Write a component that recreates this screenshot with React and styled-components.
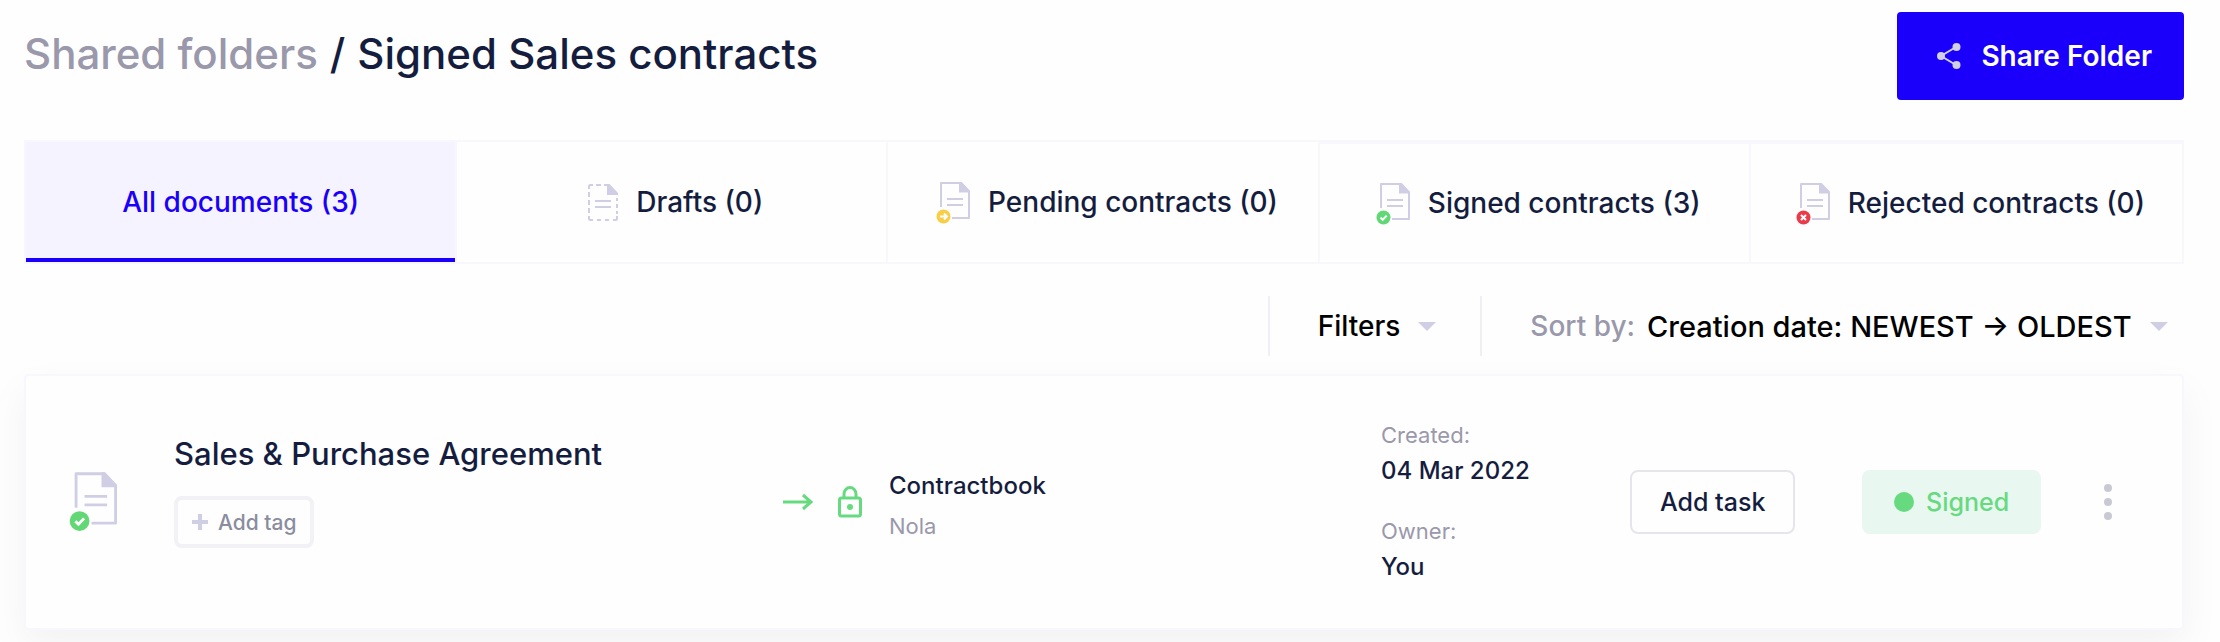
import styled, { createGlobalStyle } from 'styled-components';
import { useState } from 'react';

const GlobalStyle = createGlobalStyle`
  * {
    box-sizing: border-box;
  }

  body {
    margin: 0;
    background-color: #fefefe;
    color: #151d3f;
    font-family: Inter, 'Liberation Sans', sans-serif;
    font-weight: 500;
    overflow-x: hidden;
  }

  button,
  select {
    font: inherit;
    color: inherit;
    cursor: pointer;
  }
`;

const Page = styled.main`
  padding: 12px 36px 12px 24px;
`;

const Header = styled.header`
  display: flex;
  justify-content: space-between;
  align-items: center;
  margin-bottom: 40px;
`;

const Title = styled.h1`
  display: flex;
  gap: 12px;
  margin: 0;
  padding-bottom: 4px;
  font-size: 42px;
  line-height: 52px;
  font-weight: 500;

  a {
    color: #9a98ab;
    text-decoration: none;
  }
`;

const ShareButton = styled.button`
  display: flex;
  align-items: center;
  gap: 20px;
  height: 88px;
  padding: 0 32px 0 40px;
  border: none;
  border-radius: 4px;
  background-color: #1a00fa;
  color: #fff;
  font-size: 28px;
  font-weight: 600;
`;

const Tabs = styled.nav`
  display: grid;
  grid-template-columns: repeat(5, 1fr);
  border: 2px solid #f7f7fd;
`;

const Tab = styled.button`
  display: flex;
  justify-content: center;
  align-items: center;
  gap: 18px;
  height: 120px;
  padding: 0 0 0 ${(p) => (p.$icon ? '8px' : '0')};
  border: 0 solid #f7f7fd;
  border-right-width: 2px;
  border-top-width: ${(p) => (p.$inset ? '2px' : '0')};
  background-color: ${(p) => (p.$active ? '#f5f3ff' : 'transparent')};
  box-shadow: ${(p) => (p.$active ? 'inset 0 -4px #1a00fa' : 'none')};
  color: ${(p) => (p.$active ? '#1a00fa' : 'inherit')};
  font-size: 28px;
  white-space: nowrap;

  &:last-child {
    border-right-width: 0;
  }

  svg {
    margin-top: 2px;
  }
`;

const Toolbar = styled.div`
  display: flex;
  justify-content: flex-end;
  padding: 32px 16px 18px 0;
  color: #000;
  font-size: 28px;
`;

const ToolbarItem = styled.div`
  display: flex;
  align-items: center;
  gap: 18px;
  height: 60px;
  padding: 0 44px 0 48px;
  border-left: 2px solid #efeff6;

  &:last-child {
    padding-right: 0;
  }

  label {
    color: #9a98ab;
    margin-right: -6px;
  }
`;

const FilterButton = styled.button`
  display: flex;
  align-items: center;
  gap: 18px;
  padding: 0;
  border: none;
  background: none;
`;

const SortSelect = styled.select`
  appearance: none;
  padding: 0;
  border: none;
  background: none;
  font-size: 29px;
`;

const Card = styled.article`
  display: grid;
  grid-template-columns: 105px 609fr 55px 51px 492fr 249px 232px 242px 8px;
  align-items: center;
  height: 256px;
  padding: 0 70px 0 43px;
  border: 2px solid #f7f7fd;
  border-radius: 4px;
  background-color: #fefefe;
  box-shadow: 0 16px 40px rgba(0, 0, 0, 0.05);
`;

const DocumentInfo = styled.div`
  display: flex;
  flex-direction: column;
  align-items: flex-start;
  gap: 24px;
  padding-bottom: 20px;

  h2 {
    margin: 0;
    font-size: 31px;
    line-height: 36px;
    font-weight: 500;
  }
`;

const TagButton = styled.button`
  display: flex;
  align-items: center;
  gap: 10px;
  height: 52px;
  padding: 0 14px;
  border: 4px solid #f1f1f6;
  border-radius: 8px;
  background: none;
  color: #8a8c9f;
  font-size: 21px;
`;

const Stack = styled.div`
  display: flex;
  flex-direction: column;
  gap: 32px;
`;

const Pair = styled.div`
  display: flex;
  flex-direction: column;
  gap: 8px;
`;

const Party = styled(Pair)`
  gap: 12px;
  padding-top: 6px;
`;

const Strong = styled.span`
  font-size: 24px;
  line-height: 30px;
`;

const Muted = styled.span`
  color: #9a98ab;
  font-size: 22px;
  line-height: 26px;
  font-weight: 400;
`;

const TaskButton = styled.button`
  justify-self: start;
  height: 64px;
  padding: 0 28px;
  border: 2px solid #e6e5ec;
  border-radius: 8px;
  background: none;
  font-size: 25px;
`;

const Status = styled.span`
  justify-self: start;
  display: flex;
  align-items: center;
  gap: 12px;
  height: 64px;
  padding: 0 32px;
  border-radius: 8px;
  background-color: #e8f7f0;
  color: #67da80;
  font-size: 25px;

  &::before {
    content: '';
    width: 20px;
    height: 20px;
    border-radius: 50%;
    background-color: #67da80;
  }
`;

const MenuButton = styled.button`
  display: flex;
  flex-direction: column;
  gap: 6px;
  padding: 0;
  border: none;
  background: none;

  span {
    width: 8px;
    height: 8px;
    border-radius: 50%;
    background-color: #c9c9d3;
  }
`;

const badges = {
  pending: {
    color: '#f7ce46',
    mark: 'M4 34.5h6.500M8 31.500l3 3-3 3',
  },
  signed: {
    color: '#62d775',
    mark: 'M4.500 34.600l2.200 2.200 4-4.200',
  },
  rejected: {
    color: '#ea3b4b',
    mark: 'M5 32l5 5M10 32l-5 5',
  },
};

const DocumentIcon = ({ status, width = 34, height = 42 }) => {
  const { color, mark } = badges[status];

  return (
    <svg width={width} height={height} viewBox='0 0 34 42' fill='none' aria-hidden='true'>
      <path d='M5 25V1h20l8 8.500V36H16' stroke='#cfcee4' strokeWidth='2' strokeLinejoin='round' />
      <path d='M23 0h2.500L34 9v1.500H23z' fill='#cfcee4' />
      <path d='M11 17h16M11 23h16' stroke='#cfcee4' strokeWidth='2' />
      <circle cx='7.500' cy='34.500' r='7' fill={color} />
      <path d={mark} stroke='#fff' strokeWidth='2' />
    </svg>
  );
};

const DraftIcon = () => (
  <svg width='30' height='38' viewBox='0 0 30 38' fill='none' aria-hidden='true'>
    <path
      d='M1 5V2.500Q1 1 2.500 1H5M8 1h5M16 1h5M1 8v5M1 16v5M1 24v5M1 32v3Q1 36 2.500 36H5M9 36h4M17 36h4M25 36h2.500Q29 36 29 34.500V32M29 14v3M29 20v4M29 27v3'
      stroke='#cfcee4'
      strokeWidth='2'
    />
    <path d='M19 0h2.500L30 9v2H19z' fill='#cfcee4' />
    <path d='M7 17h16M7 23h16' stroke='#cfcee4' strokeWidth='2' />
  </svg>
);

const ShareIcon = () => (
  <svg width='24' height='26' viewBox='0 0 24 26' fill='#d0cfe6' aria-hidden='true'>
    <path d='M19 4L4 13l15 9' fill='none' stroke='#d0cfe6' strokeWidth='2' />
    <circle cx='19.500' cy='4' r='4' />
    <circle cx='4' cy='13' r='4' />
    <circle cx='19.500' cy='22' r='4' />
  </svg>
);

const Caret = () => (
  <svg width='18' height='9' viewBox='0 0 18 9' aria-hidden='true'>
    <path d='M0 0h18L9 9z' fill='#cfcee4' />
  </svg>
);

const PlusIcon = () => (
  <svg width='16' height='16' viewBox='0 0 16 16' aria-hidden='true'>
    <path d='M8 0v16M0 8h16' stroke='#cfcee4' strokeWidth='4' />
  </svg>
);

const ArrowIcon = () => (
  <svg width='30' height='18' viewBox='0 0 30 18' fill='none' aria-hidden='true'>
    <path d='M0 9h28M20 2l8 7-8 7' stroke='#67da80' strokeWidth='3' />
  </svg>
);

const LockIcon = () => (
  <svg width='24' height='32' viewBox='0 0 24 32' fill='none' aria-hidden='true'>
    <rect x='1.500' y='12' width='21' height='18' rx='2' stroke='#67da80' strokeWidth='3' />
    <path d='M6 12V8a6 6.500 0 0 1 12 0v4' stroke='#67da80' strokeWidth='3' />
    <circle cx='12' cy='21' r='3' fill='#67da80' />
  </svg>
);

const tabs = [
  { name: 'All documents (3)' },
  { name: 'Drafts (0)', icon: <DraftIcon /> },
  { name: 'Pending contracts (0)', icon: <DocumentIcon status='pending' /> },
  { name: 'Signed contracts (3)', icon: <DocumentIcon status='signed' />, inset: true },
  { name: 'Rejected contracts (0)', icon: <DocumentIcon status='rejected' />, inset: true },
];

const App = () => {
  const [active, setActive] = useState(0);

  return (
    <Page>
      <GlobalStyle />
      <Header>
        <Title>
          <a href='#shared'>Shared folders</a>
          <span>/</span>
          <span>Signed Sales contracts</span>
        </Title>
        <ShareButton>
          <ShareIcon />
          Share Folder
        </ShareButton>
      </Header>
      <Tabs>
        {tabs.map((tab, i) => (
          <Tab
            key={tab.name}
            $active={i === active}
            $icon={Boolean(tab.icon)}
            $inset={tab.inset}
            onClick={() => setActive(i)}
          >
            {tab.icon}
            <span>{tab.name}</span>
          </Tab>
        ))}
      </Tabs>
      <Toolbar>
        <ToolbarItem>
          <FilterButton>
            Filters
            <Caret />
          </FilterButton>
        </ToolbarItem>
        <ToolbarItem>
          <label htmlFor='sort'>Sort by:</label>
          <SortSelect id='sort'>
            <option>Creation date: NEWEST → OLDEST</option>
          </SortSelect>
          <Caret />
        </ToolbarItem>
      </Toolbar>
      <Card>
        <DocumentIcon status='signed' width={48} height={60} />
        <DocumentInfo>
          <h2>Sales & Purchase Agreement</h2>
          <TagButton>
            <PlusIcon />
            Add tag
          </TagButton>
        </DocumentInfo>
        <ArrowIcon />
        <LockIcon />
        <Party>
          <Strong>Contractbook</Strong>
          <Muted>Nola</Muted>
        </Party>
        <Stack>
          <Pair>
            <Muted>Created:</Muted>
            <Strong>04 Mar 2022</Strong>
          </Pair>
          <Pair>
            <Muted>Owner:</Muted>
            <Strong>You</Strong>
          </Pair>
        </Stack>
        <TaskButton>Add task</TaskButton>
        <Status>Signed</Status>
        <MenuButton aria-label='More actions'>
          <span />
          <span />
          <span />
        </MenuButton>
      </Card>
    </Page>
  );
};
export default App;
